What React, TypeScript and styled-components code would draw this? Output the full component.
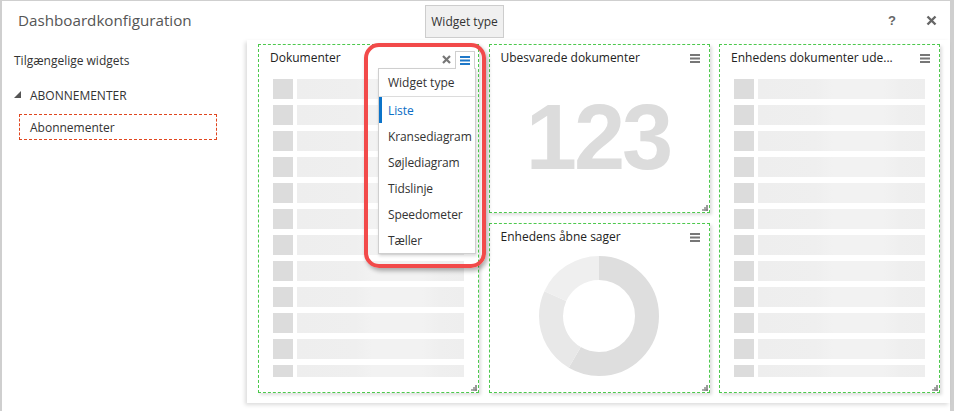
import React from "react";
import styled, { createGlobalStyle } from "styled-components";

const GlobalStyle = createGlobalStyle`
  html, body { margin: 0; padding: 0; }
  body {
    background: #cfcfcf;
    font-family: "Segoe UI", "Open Sans", "Noto Sans", sans-serif;
    color: #333;
    overflow: hidden;
  }
  * { box-sizing: border-box; }
`;

const Page = styled.div`
  height: 411px;
  padding: 1px 4px 0 2px;
`;

const Dialog = styled.div`
  position: relative;
  height: 410px;
  background: #fff;
  display: flex;
  flex-direction: column;
`;

const Header = styled.div`
  height: 39px;
  display: flex;
  align-items: center;
  padding: 0 13px 0 16px;
  gap: 30px;
`;

const Title = styled.div`
  flex: 1;
  font-size: 15.2px;
  color: #555;
  padding-bottom: 2px;
`;

const HeaderButton = styled.div`
  font-family: "Liberation Sans", Arial, sans-serif;
  font-weight: bold;
  font-size: 13px;
  color: #666;
  line-height: 1;
  display: flex;
  align-items: center;
`;

const Tooltip = styled.div`
  position: absolute;
  left: 423px;
  top: 4px;
  width: 79px;
  height: 33px;
  background: #f0f0f0;
  border: 1px solid #cdcdcd;
  display: flex;
  align-items: center;
  justify-content: center;
  font-size: 12px;
  color: #333;
`;

const Body = styled.div`
  flex: 1;
  display: flex;
  min-height: 0;
`;

const Sidebar = styled.div`
  width: 245px;
  padding: 12px 30px 0 12px;
  display: flex;
  flex-direction: column;
`;

const SideHeading = styled.div`
  font-size: 12px;
  color: #333;
  height: 18px;
  line-height: 18px;
`;

const GroupRow = styled.div`
  margin-top: 16px;
  display: flex;
  align-items: center;
  gap: 8px;
  font-size: 12px;
  color: #333;
  height: 18px;
`;

const SelectedItem = styled.div`
  margin: 10px 0 0 5px;
  height: 26px;
  border: 1px dashed #e0451e;
  padding-left: 10px;
  display: flex;
  align-items: center;
  font-size: 12px;
  color: #333;
`;

const Canvas = styled.div`
  flex: 1;
  margin-bottom: 8px;
  background: #fff;
  box-shadow: -2px 2px 4px rgba(0, 0, 0, 0.14);
  padding: 4px 0 0 11px;
  display: grid;
  grid-template-columns: 221px 221px 221px;
  grid-template-rows: 169px 170px;
  column-gap: 9.5px;
  row-gap: 10px;
`;

const Widget = styled.div<{ $col: number; $row: string }>`
  position: relative;
  grid-column: ${(p) => p.$col};
  grid-row: ${(p) => p.$row};
  border: 1px dashed #4cc94c;
  background: #fff;
  box-shadow: 2px 2px 3px rgba(0, 0, 0, 0.13);
  display: flex;
  flex-direction: column;
`;

const WidgetHeader = styled.div`
  height: 30px;
  display: flex;
  align-items: flex-start;
  padding: 5px 9px 0 11px;
`;

const WidgetTitle = styled.div`
  flex: 1;
  font-size: 12px;
  color: #222;
  line-height: 16px;
  white-space: nowrap;
`;

const MenuIcon = styled.div`
  margin-top: 4px;
  display: flex;
`;

const List = styled.div`
  flex: 1;
  min-height: 0;
  overflow: hidden;
  margin: 4px 14px 15px 14px;
  display: flex;
  flex-direction: column;
  gap: 6px;
`;

const Row = styled.div`
  flex: none;
  height: 20px;
  display: flex;
  gap: 4px;
`;

const Square = styled.div`
  width: 20px;
  background: #dcdcdc;
`;

const Bar = styled.div`
  flex: 1;
  background: linear-gradient(
    90deg,
    #eeeeee 0%,
    #efefef 35%,
    #f2f2f2 45%,
    #f2f2f2 75%,
    #efefef 85%,
    #eeeeee 100%
  );
`;

const Center = styled.div`
  flex: 1;
  display: flex;
  align-items: center;
  justify-content: center;
  padding-bottom: 14px;
`;

const Counter = styled.div`
  font-family: "Liberation Sans", Arial, sans-serif;
  font-weight: bold;
  font-size: 92px;
  letter-spacing: -3px;
  color: #dcdcdc;
  line-height: 1;
  margin-left: -2px;
`;

const Resize = styled.div`
  position: absolute;
  right: 1px;
  bottom: 1px;
  display: flex;
`;

const Popup = styled.div`
  position: absolute;
  left: 119px;
  top: 23px;
  width: 98px;
  background: #fff;
  border: 1px solid #cfcfcf;
  box-shadow: 1px 2px 3px rgba(0, 0, 0, 0.15);
  z-index: 2;
`;

const PopupHeader = styled.div`
  height: 28px;
  display: flex;
  align-items: center;
  padding-left: 9px;
  font-size: 12px;
  color: #333;
  border-bottom: 1px solid #dcdcdc;
`;

const PopupItem = styled.div<{ $active?: boolean }>`
  height: 26px;
  display: flex;
  align-items: center;
  padding-left: ${(p) => (p.$active ? "6px" : "9px")};
  border-left: ${(p) => (p.$active ? "3px solid #0b73c9" : "none")};
  font-size: 12px;
  letter-spacing: -0.1px;
  color: ${(p) => (p.$active ? "#0b6ec5" : "#333")};
`;

const MenuTab = styled.div`
  position: absolute;
  left: 196px;
  top: 6px;
  width: 20px;
  height: 18px;
  background: #fff;
  border: 1px solid #cfcfcf;
  border-bottom: none;
  display: flex;
  align-items: center;
  justify-content: center;
  z-index: 3;
`;

const CloseMark = styled.div`
  position: absolute;
  left: 183px;
  top: 10px;
  display: flex;
  z-index: 3;
`;

const Annotation = styled.div`
  position: absolute;
  left: 105px;
  top: -2px;
  width: 122px;
  height: 225px;
  border: 4px solid #f24a4a;
  border-radius: 15px;
  box-shadow: 2px 3px 4px rgba(0, 0, 0, 0.3);
  z-index: 4;
  pointer-events: none;
`;

const Hamburger = ({ color = "#777" }: { color?: string }) => (
  <svg width="10" height="9" viewBox="0 0 10 9">
    <rect x="0" y="0" width="10" height="2" fill={color} />
    <rect x="0" y="3.5" width="10" height="2" fill={color} />
    <rect x="0" y="7" width="10" height="2" fill={color} />
  </svg>
);

const Grip = () => (
  <svg width="6" height="6" viewBox="0 0 6 6">
    <rect x="4" y="0" width="2" height="2" fill="#999" />
    <rect x="2" y="2" width="2" height="2" fill="#aaa" />
    <rect x="4" y="2" width="2" height="2" fill="#999" />
    <rect x="0" y="4" width="2" height="2" fill="#aaa" />
    <rect x="2" y="4" width="2" height="2" fill="#999" />
    <rect x="4" y="4" width="2" height="2" fill="#888" />
  </svg>
);

const Donut = () => {
  const r = 48;
  const c = 2 * Math.PI * r;
  const segs = [
    { from: 0, to: 210, color: "#dedede" },
    { from: 210, to: 294, color: "#e8e8e8" },
    { from: 294, to: 360, color: "#efefef" },
  ];
  return (
    <svg width="120" height="120" viewBox="0 0 120 120">
      <g transform="rotate(-90 60 60)">
        {segs.map((s, i) => {
          const len = ((s.to - s.from) / 360) * c;
          const off = (s.from / 360) * c;
          return (
            <circle
              key={i}
              cx="60"
              cy="60"
              r={r}
              fill="none"
              stroke={s.color}
              strokeWidth="24"
              strokeDasharray={`${len} ${c - len}`}
              strokeDashoffset={-off}
            />
          );
        })}
      </g>
    </svg>
  );
};

const rows = Array.from({ length: 12 });

const ListBody = () => (
  <List>
    {rows.map((_, i) => (
      <Row key={i}>
        <Square />
        <Bar />
      </Row>
    ))}
  </List>
);

export default function App() {
  return (
    <>
      <GlobalStyle />
      <Page>
        <Dialog>
          <Header>
            <Title>Dashboardkonfiguration</Title>
            <HeaderButton>?</HeaderButton>
            <HeaderButton>
              <svg width="11" height="11" viewBox="0 0 11 11">
                <path d="M1.5 1.5 L9.5 9.5 M9.5 1.5 L1.5 9.5" stroke="#666" strokeWidth="2.4" />
              </svg>
            </HeaderButton>
          </Header>
          <Tooltip>Widget type</Tooltip>
          <Body>
            <Sidebar>
              <SideHeading>Tilgængelige widgets</SideHeading>
              <GroupRow>
                <svg width="8" height="8" viewBox="0 0 8 8">
                  <polygon points="7,0 7,7 0,7" fill="#555" />
                </svg>
                ABONNEMENTER
              </GroupRow>
              <SelectedItem>Abonnementer</SelectedItem>
            </Sidebar>
            <Canvas>
              <Widget $col={1} $row="1 / span 2">
                <WidgetHeader>
                  <WidgetTitle>Dokumenter</WidgetTitle>
                </WidgetHeader>
                <ListBody />
                <CloseMark>
                  <svg width="9" height="9" viewBox="0 0 9 9">
                    <path d="M1 1 L8 8 M8 1 L1 8" stroke="#777" strokeWidth="2.2" />
                  </svg>
                </CloseMark>
                <MenuTab>
                  <Hamburger color="#1f78c8" />
                </MenuTab>
                <Popup>
                  <PopupHeader>Widget type</PopupHeader>
                  <PopupItem $active>Liste</PopupItem>
                  <PopupItem>Kransediagram</PopupItem>
                  <PopupItem>Søjlediagram</PopupItem>
                  <PopupItem>Tidslinje</PopupItem>
                  <PopupItem>Speedometer</PopupItem>
                  <PopupItem>Tæller</PopupItem>
                </Popup>
                <Annotation />
                <Resize>
                  <Grip />
                </Resize>
              </Widget>
              <Widget $col={2} $row="1">
                <WidgetHeader>
                  <WidgetTitle>Ubesvarede dokumenter</WidgetTitle>
                  <MenuIcon>
                    <Hamburger />
                  </MenuIcon>
                </WidgetHeader>
                <Center>
                  <Counter>123</Counter>
                </Center>
                <Resize>
                  <Grip />
                </Resize>
              </Widget>
              <Widget $col={2} $row="2">
                <WidgetHeader>
                  <WidgetTitle>Enhedens åbne sager</WidgetTitle>
                  <MenuIcon>
                    <Hamburger />
                  </MenuIcon>
                </WidgetHeader>
                <Center>
                  <Donut />
                </Center>
                <Resize>
                  <Grip />
                </Resize>
              </Widget>
              <Widget $col={3} $row="1 / span 2">
                <WidgetHeader>
                  <WidgetTitle>Enhedens dokumenter ude...</WidgetTitle>
                  <MenuIcon>
                    <Hamburger />
                  </MenuIcon>
                </WidgetHeader>
                <ListBody />
                <Resize>
                  <Grip />
                </Resize>
              </Widget>
            </Canvas>
          </Body>
        </Dialog>
      </Page>
    </>
  );
}
